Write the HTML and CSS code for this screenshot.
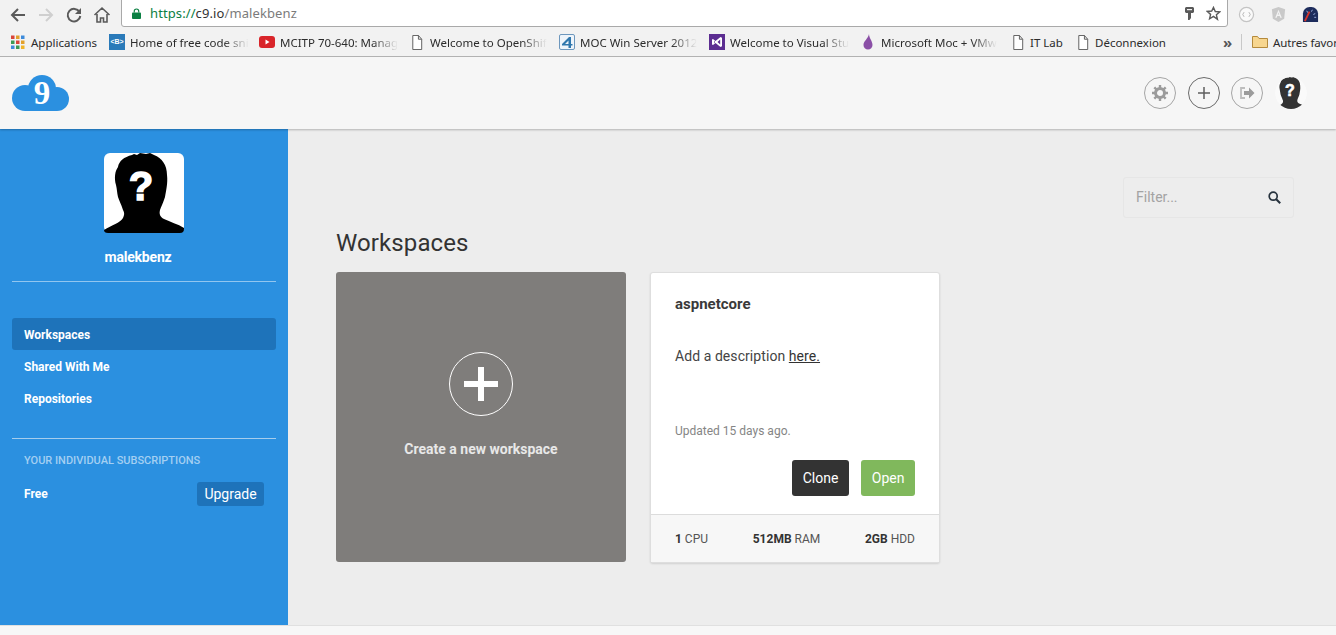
FILE: index.html
```html
<!DOCTYPE html>
<html lang="en">
<head>
  <meta charset="UTF-8">
  <meta name="viewport" content="width=device-width, initial-scale=1.0">
  <title>malekbenz - Cloud9</title>
  <link rel="stylesheet" href="styles.css">
</head>
<body>
  <!-- browser toolbar -->
  <div class="toolbar">
    <div class="nav-icons">
      <svg class="nav-icon" viewBox="0 0 18 18"><path d="M16 9H3M9 3L3 9l6 6" fill="none" stroke="#5a5a5a" stroke-width="2"/></svg>
      <svg class="nav-icon" viewBox="0 0 18 18"><path d="M2 9h13M9 3l6 6-6 6" fill="none" stroke="#cfcfcf" stroke-width="2"/></svg>
      <svg class="nav-icon" viewBox="0 0 18 18"><path d="M14.5 6A6.3 6.3 0 1 0 15.3 10" fill="none" stroke="#5a5a5a" stroke-width="2"/><path d="M16 2v6h-6z" fill="#5a5a5a"/></svg>
      <svg class="nav-icon" viewBox="0 0 18 18"><path d="M1.5 9L9 2l7.5 7M4 8v8h3.500v-4h3v4H14V8" fill="none" stroke="#5a5a5a" stroke-width="1.6"/></svg>
    </div>
    <div class="url-bar">
      <svg class="lock" viewBox="0 0 10 12"><path d="M2.5 5V3.5a2.5 2.5 0 0 1 5 0V5" fill="none" stroke="#0b8043" stroke-width="1.3"/><rect y="5" width="10" height="7" rx="1" fill="#0b8043"/></svg>
      <span class="url"><span class="url-scheme">https://</span><span class="url-host">c9.io</span>/malekbenz</span>
      <svg class="key" viewBox="0 0 9 13"><path d="M1 0h7l1 1v4L8 6H6v5L4.500 13H3V6H1L0 5V1z" fill="#5a5a5a"/><rect x="2" y="2" width="5" height="1.200" fill="#f2f2f2"/></svg>
      <svg class="star" viewBox="0 0 16 16"><path d="M8 1.5l1.900 4.400 4.800.4-3.600 3.100 1.100 4.700L8 11.100l-4.200 2.500 1.100-4.700-3.600-3.100 4.800-.4z" fill="none" stroke="#5a5a5a" stroke-width="1.5"/></svg>
    </div>
    <div class="ext-icons">
      <svg class="ext-icon" viewBox="0 0 18 18"><circle cx="9" cy="9" r="7.500" fill="#fafafa" stroke="#c4c4c4" stroke-width="1.300"/><path d="M6.500 6.500L5 9l1.500 2.500M11.500 6.500L13 9l-1.500 2.500" fill="none" stroke="#b5b5b5"/></svg>
      <svg class="ext-icon" viewBox="0 0 18 18"><path d="M9 1l7 2.500-1 10L9 17l-6-3.500-1-10z" fill="#c9c9c9"/><path d="M9 4l-3.500 8.500h1.600l.7-2h2.400l.7 2h1.600zM8.300 9L9 7l.7 2z" fill="#f2f2f2"/></svg>
      <svg class="ext-icon" viewBox="0 0 18 18"><path d="M1 17V8a7 7 0 0 1 7-7h2a7 7 0 0 1 7 7v9z" fill="#1d2c5c"/><path d="M3 16L8 6" stroke="#d8342b" stroke-width="2"/><path d="M5 5l1 2M11 4l-1 2M14 8l-2 1M15 12h-2" stroke="#9fb4e0"/></svg>
    </div>
  </div>

  <!-- bookmarks -->
  <div class="bookmarks">
    <a class="bookmark bookmark-apps">
      <svg class="bm-icon-small" viewBox="0 0 14 14">
        <rect width="3.500" height="3.500" fill="#d9443a"/><rect x="5" width="3.500" height="3.500" fill="#e2a12c"/><rect x="10" width="3.500" height="3.500" fill="#3d8bdb"/>
        <rect y="5" width="3.500" height="3.500" fill="#3c9a55"/><rect x="5" y="5" width="3.500" height="3.500" fill="#d9443a"/><rect x="10" y="5" width="3.500" height="3.500" fill="#e2a12c"/>
        <rect y="10" width="3.500" height="3.500" fill="#3d8bdb"/><rect x="5" y="10" width="3.500" height="3.500" fill="#3c9a55"/><rect x="10" y="10" width="3.500" height="3.500" fill="#f0b429"/>
      </svg>
      <span class="bm-text">Applications</span>
    </a>
    <a class="bookmark">
      <span class="bm-tile">&lt;B&gt;</span>
      <span class="bm-text bm-fade">Home of free code sni</span>
    </a>
    <a class="bookmark bookmark-wide">
      <svg class="bm-icon" viewBox="0 0 16 16"><rect y="2" width="16" height="12" rx="3" fill="#d9252a"/><path d="M6.500 5.500v5l4-2.500z" fill="#fff"/></svg>
      <span class="bm-text bm-fade">MCITP 70-640: Manag</span>
    </a>
    <a class="bookmark bookmark-narrow">
      <svg class="bm-icon-small" viewBox="0 0 14 16"><path d="M2.500.5h6l3.500 4v11h-9.500zM8.500.5v4h3.500" fill="#fff" stroke="#5a5a5a"/></svg>
      <span class="bm-text bm-fade">Welcome to OpenShif</span>
    </a>
    <a class="bookmark">
      <svg class="bm-icon" viewBox="0 0 16 16"><rect x=".5" y=".5" width="15" height="15" rx="1.500" fill="#eef4fa" stroke="#6d97bd"/><path d="M10 3L3 10v1.500h6.500V14H12v-2.500h1.500V10H12V3zM6 10l3.500-3.500V10z" fill="#2f77ad"/></svg>
      <span class="bm-text bm-fade">MOC Win Server 2012</span>
    </a>
    <a class="bookmark bookmark-wide">
      <svg class="bm-icon" viewBox="0 0 16 16"><rect width="16" height="16" fill="#5c2d91"/><path d="M11.500 3L6.500 7 4 5 3 5.500v5L4 11l2.500-2 5 4 1.500-.8V3.800zM5 9.200V6.800L6 8zM11.200 10.500L8.500 8l2.700-2.500z" fill="#fff"/></svg>
      <span class="bm-text bm-fade">Welcome to Visual Stu</span>
    </a>
    <a class="bookmark bookmark-wide">
      <svg class="bm-icon" viewBox="0 0 16 16"><path d="M9 0C9 4 12.500 7 12.500 11A4.500 4.500 0 0 1 3.500 11C3.500 7 8 5 9 0z" fill="#8a4fa6"/></svg>
      <span class="bm-text bm-fade">Microsoft Moc + VMw</span>
    </a>
    <a class="bookmark bookmark-short">
      <svg class="bm-icon-small" viewBox="0 0 14 16"><path d="M2.500.5h6l3.500 4v11h-9.500zM8.500.5v4h3.500" fill="#fff" stroke="#5a5a5a"/></svg>
      <span class="bm-text">IT Lab</span>
    </a>
    <a class="bookmark bookmark-last">
      <svg class="bm-icon-small" viewBox="0 0 14 16"><path d="M2.500.5h6l3.500 4v11h-9.500zM8.500.5v4h3.500" fill="#fff" stroke="#5a5a5a"/></svg>
      <span class="bm-text">Déconnexion</span>
    </a>
    <span class="bm-more">»</span>
    <span class="bm-sep"></span>
    <a class="bookmark bookmark-folder">
      <svg class="bm-folder" viewBox="0 0 16 14"><path d="M.5 12.500v-11h5l1.500 2h8.500v9z" fill="#f7d68f" stroke="#b58a3c"/></svg>
      <span class="bm-text">Autres favor</span>
    </a>
  </div>

  <!-- c9 header -->
  <header class="app-header">
    <svg class="logo" width="58" height="36" viewBox="0 0 58 36">
      <g fill="#2b90e0">
        <circle cx="30" cy="14" r="14"/>
        <circle cx="13" cy="23" r="13"/>
        <circle cx="45" cy="24" r="12"/>
        <rect x="13" y="14" width="32" height="22"/>
      </g>
      <text class="logo-nine" x="30" y="29" text-anchor="middle">9</text>
    </svg>
    <div class="header-actions">
      <span class="circle-btn">
        <svg width="16" height="16" viewBox="0 0 16 16"><circle cx="8" cy="8" r="4.500" fill="none" stroke="#9b9b9b" stroke-width="3"/><path d="M8 0v3M8 13v3M0 8h3M13 8h3M2.300 2.300l2.200 2.200M11.500 11.500l2.200 2.200M13.700 2.300l-2.200 2.200M4.500 11.500l-2.200 2.200" stroke="#9b9b9b" stroke-width="2.400"/></svg>
      </span>
      <span class="circle-btn circle-btn-dark">
        <svg width="14" height="14" viewBox="0 0 14 14"><path d="M7 1v12M1 7h12" stroke="#5f5f5f" stroke-width="1.500"/></svg>
      </span>
      <span class="circle-btn">
        <svg width="16" height="14" viewBox="0 0 16 14"><path d="M6 2H2v10h4" fill="none" stroke="#bdbdbd" stroke-width="1.800"/><path d="M5 5h5V1.500L15.500 7 10 12.500V9H5z" fill="#9b9b9b"/></svg>
      </span>
      <span class="header-avatar">
        <svg width="32" height="32" viewBox="0 0 80 80">
          <circle cx="40" cy="40" r="40" fill="#fafafa"/>
          <path class="head-dark" d="M0 77C8 72 16 70 19 65 21 61 20 59 19 57 17 51 15 47 14 44 13 40 13 36 12 32 10 25 11 18 14 14 15 8 20 4 28 2L30 1 33 2 36 0 42 1 46 0 50 2C58 5 63 12 63 22 64 30 62 38 61 44 59 50 57 54 56 57 55 61 56 64 60 66 66 69 74 71 80 75V80H0z"/>
          <text class="avatar-mark" x="37" y="47" text-anchor="middle">?</text>
        </svg>
      </span>
    </div>
  </header>

  <div class="page">
    <aside class="sidebar">
      <div class="profile">
        <svg class="profile-pic" width="80" height="80" viewBox="0 0 80 80">
          <rect width="80" height="80" rx="6" fill="#fff"/>
          <path d="M0 77C8 72 16 70 19 65 21 61 20 59 19 57 17 51 15 47 14 44 13 40 13 36 12 32 10 25 11 18 14 14 15 8 20 4 28 2L30 1 33 2 36 0 42 1 46 0 50 2C58 5 63 12 63 22 64 30 62 38 61 44 59 50 57 54 56 57 55 61 56 64 60 66 66 69 74 71 80 75V76Q80 80 76 80H4Q0 80 0 77z" fill="#000"/>
          <text class="profile-mark" x="37" y="47" text-anchor="middle">?</text>
        </svg>
        <div class="username">malekbenz</div>
      </div>
      <nav class="side-nav">
        <a class="side-link side-link-active">Workspaces</a>
        <a class="side-link">Shared With Me</a>
        <a class="side-link">Repositories</a>
      </nav>
      <div class="subs">
        <div class="subs-title">YOUR INDIVIDUAL SUBSCRIPTIONS</div>
        <div class="subs-row">
          <span class="subs-plan">Free</span>
          <a class="upgrade-btn">Upgrade</a>
        </div>
      </div>
    </aside>

    <main class="content">
      <div class="filter-row">
        <div class="filter">
          <span class="filter-text">Filter...</span>
          <svg width="13" height="13" viewBox="0 0 13 13"><circle cx="5.200" cy="5.200" r="4" fill="none" stroke="#26323d" stroke-width="1.700"/><path d="M8.200 8.200l4 4" stroke="#26323d" stroke-width="2"/></svg>
        </div>
      </div>
      <h1 class="title">Workspaces</h1>
      <div class="cards">
        <a class="new-card">
          <span class="new-circle">
            <svg width="34" height="34" viewBox="0 0 34 34"><path d="M17 0v34M0 17h34" stroke="#fff" stroke-width="6"/></svg>
          </span>
          <span class="new-label">Create a new workspace</span>
        </a>
        <div class="ws-card">
          <div class="ws-body">
            <div class="ws-name">aspnetcore</div>
            <div class="ws-desc">Add a description <a class="ws-link">here.</a></div>
            <div class="ws-updated">Updated 15 days ago.</div>
            <div class="ws-buttons">
              <a class="btn btn-clone">Clone</a>
              <a class="btn btn-open">Open</a>
            </div>
          </div>
          <div class="ws-specs">
            <span><b>1</b> CPU</span>
            <span><b>512MB</b> RAM</span>
            <span><b>2GB</b> HDD</span>
          </div>
        </div>
      </div>
    </main>
  </div>

  <footer class="page-footer"></footer>
</body>
</html>
```

FILE: styles.css
```css
/* reset */
* {
  box-sizing: border-box;
}

html, body {
  margin: 0;
  padding: 0;
  height: 100%;
  overflow: hidden;
}

body {
  width: 1336px;
  height: 635px;
  font-family: Roboto, sans-serif;
  background-color: #ededed;
  color: #333;
}

a {
  text-decoration: none;
}

svg {
  display: block;
  flex: none;
}

/* browser toolbar */
.toolbar {
  display: flex;
  align-items: flex-start;
  height: 28px;
  background-color: #f2f2f2;
}

.nav-icons {
  display: flex;
  gap: 10px;
  width: 121px;
  padding: 6px 0 0 9px;
}

.nav-icon {
  width: 18px;
  height: 18px;
}

.url-bar {
  display: flex;
  align-items: center;
  width: 1107px;
  height: 28px;
  margin-top: -1px;
  padding: 0 6px 0 10px;
  background-color: #fff;
  border: 1px solid #a9a9a9;
  border-radius: 0 0 3px 3px;
}

.lock {
  width: 9px;
  height: 11px;
  margin-right: 9px;
}

.url {
  flex: 1;
  font-family: "Noto Sans", sans-serif;
  font-size: 13px;
  letter-spacing: 0.1px;
  color: #7b7b7b;
}

.url-scheme {
  color: #0b8043;
}

.url-host {
  color: #333;
}

.key {
  width: 9px;
  height: 13px;
  margin-right: 12px;
}

.star {
  width: 15px;
  height: 15px;
}

.ext-icons {
  display: flex;
  gap: 15px;
  padding: 6px 0 0 10px;
}

.ext-icon {
  width: 17px;
  height: 17px;
}

/* bookmarks */
.bookmarks {
  display: flex;
  align-items: center;
  height: 29px;
  padding-left: 11px;
  background-color: #f2f2f2;
  border-bottom: 1px solid #b5b5b5;
  font-family: "Noto Sans", sans-serif;
  font-size: 11.5px;
  color: #2b2b2b;
  white-space: nowrap;
  overflow: hidden;
}

.bookmark {
  display: flex;
  flex: none;
  align-items: center;
  gap: 5px;
  width: 150px;
}

.bookmark-apps {
  width: 98px;
  gap: 6px;
}

.bookmark-wide {
  width: 151px;
}

.bookmark-narrow {
  width: 149px;
  gap: 6px;
}

.bookmark-short {
  width: 65px;
}

.bookmark-last {
  width: 147px;
}

.bookmark-folder {
  width: 84px;
  letter-spacing: -0.1px;
}

.bm-icon {
  width: 16px;
  height: 16px;
}

.bm-icon-small {
  width: 14px;
  height: 15px;
}

.bm-tile {
  flex: none;
  width: 16px;
  height: 16px;
  background-color: #2a7ab9;
  color: #fff;
  font-family: "Liberation Sans", sans-serif;
  font-size: 7px;
  font-weight: 700;
  line-height: 16px;
  text-align: center;
}

.bm-text {
  display: block;
}

.bm-fade {
  -webkit-mask-image: linear-gradient(to right, #000 78%, transparent);
  mask-image: linear-gradient(to right, #000 78%, transparent);
}

.bm-more {
  flex: none;
  width: 18px;
  font-size: 15px;
  font-weight: 700;
  line-height: 14px;
  color: #555;
}

.bm-sep {
  flex: none;
  width: 1px;
  height: 16px;
  margin-right: 10px;
  background-color: #c8c8c8;
}

.bm-folder {
  width: 16px;
  height: 14px;
}

/* c9 header */
.app-header {
  position: relative;
  display: flex;
  align-items: center;
  justify-content: space-between;
  height: 72px;
  padding: 0 29px 0 12px;
  background-color: #f6f6f6;
  box-shadow: 0 1px 2px rgba(0, 0, 0, 0.25);
}

.logo-nine {
  font-family: "Liberation Serif", serif;
  font-size: 33px;
  font-weight: 700;
  fill: #fff;
}

.header-actions {
  display: flex;
  align-items: center;
  gap: 12px;
}

.circle-btn {
  display: flex;
  align-items: center;
  justify-content: center;
  width: 32px;
  height: 32px;
  border: 1px solid #a5a5a5;
  border-radius: 50%;
}

.circle-btn-dark {
  margin-right: -1px;
  border-color: #6a6a6a;
}

.header-avatar {
  display: block;
  width: 32px;
  height: 32px;
  overflow: hidden;
  border-radius: 50%;
}

.head-dark {
  fill: #333;
}

.avatar-mark, .profile-mark {
  font-family: "Liberation Sans", sans-serif;
  font-weight: 700;
  font-size: 40px;
  fill: #fff;
  stroke: #fff;
  stroke-width: 1.5px;
}

/* page */
.page {
  display: flex;
  height: 496px;
}

.sidebar {
  flex: none;
  width: 288px;
  padding: 24px 12px 0;
  background-color: #2b90e0;
  color: #fff;
}

.profile {
  height: 129px;
  border-bottom: 1px solid #92c6ef;
  text-align: center;
}

.profile-pic {
  margin: 0 auto;
}

.username {
  margin-top: 16px;
  padding-right: 12px;
  font-size: 14px;
  font-weight: 700;
  line-height: 16px;
  letter-spacing: -0.2px;
}

.side-nav {
  display: flex;
  flex-direction: column;
  height: 157px;
  padding-top: 36px;
  border-bottom: 1px solid #a6cdec;
}

.side-link {
  display: block;
  height: 32px;
  padding-left: 12px;
  border-radius: 3px;
  font-size: 12px;
  font-weight: 700;
  line-height: 34px;
  color: #fff;
}

.side-link-active {
  background-color: #1e73ba;
}

.subs {
  padding: 15px 12px 0;
}

.subs-title {
  font-size: 11px;
  font-weight: 500;
  line-height: 13px;
  color: #a3cff2;
}

.subs-row {
  display: flex;
  align-items: center;
  justify-content: space-between;
  margin-top: 15px;
}

.subs-plan {
  font-size: 12px;
  font-weight: 700;
}

.upgrade-btn {
  display: block;
  width: 67px;
  height: 24px;
  background-color: #1e73ba;
  border-radius: 3px;
  font-size: 14px;
  line-height: 24px;
  text-align: center;
  color: #fff;
}

.content {
  flex: 1;
  padding: 48px 42px 0 48px;
}

.filter-row {
  display: flex;
  justify-content: flex-end;
}

.filter {
  display: flex;
  align-items: center;
  justify-content: space-between;
  width: 171px;
  height: 41px;
  padding: 0 12px;
  border: 1px solid #e6e6e6;
  border-radius: 3px;
}

.filter-text {
  margin-top: -2px;
  font-size: 14px;
  color: #a3a3a3;
}

.title {
  margin: 11px 0 15px;
  font-size: 24px;
  font-weight: 400;
  line-height: 28px;
  letter-spacing: 0.1px;
  color: #333;
}

.cards {
  display: flex;
  gap: 24px;
}

.new-card {
  display: flex;
  flex-direction: column;
  align-items: center;
  width: 290px;
  height: 290px;
  padding-top: 80px;
  background-color: #7f7d7b;
  border-radius: 3px;
}

.new-circle {
  display: flex;
  align-items: center;
  justify-content: center;
  width: 64px;
  height: 64px;
  border: 1px solid #fff;
  border-radius: 50%;
}

.new-label {
  margin-top: 25px;
  font-size: 14px;
  font-weight: 700;
  line-height: 16px;
  color: #e8e8e8;
}

.ws-card {
  display: flex;
  flex-direction: column;
  width: 290px;
  height: 291px;
  background-color: #fff;
  border: 1px solid #dedede;
  border-radius: 3px;
  box-shadow: 0 1px 2px rgba(0, 0, 0, 0.12);
}

.ws-body {
  flex: 1;
  padding: 23px 24px 0;
}

.ws-name {
  font-size: 15px;
  font-weight: 700;
  line-height: 16px;
  color: #3a3a3a;
}

.ws-desc {
  margin-top: 36px;
  font-size: 14px;
  line-height: 16px;
  letter-spacing: 0.07px;
  color: #444;
}

.ws-link {
  color: #333;
  text-decoration: underline;
}

.ws-updated {
  margin-top: 60px;
  font-size: 12px;
  line-height: 14px;
  color: #858585;
}

.ws-buttons {
  display: flex;
  justify-content: flex-end;
  gap: 12px;
  margin-top: 22px;
}

.btn {
  display: block;
  height: 36px;
  padding: 0 11px;
  border-radius: 3px;
  font-size: 14px;
  line-height: 36px;
  color: #fff;
}

.btn-clone {
  background-color: #333;
}

.btn-open {
  padding: 0 10.5px;
  background-color: #80b85c;
}

.ws-specs {
  display: flex;
  justify-content: space-between;
  height: 48px;
  padding: 0 24px;
  background-color: #f7f7f7;
  border-top: 1px solid #dcdcdc;
  font-size: 12px;
  line-height: 49px;
  color: #555;
}

.ws-specs b {
  color: #333;
}

.page-footer {
  height: 10px;
  background-color: #f7f7f7;
  border-top: 1px solid #e0e0e0;
}
```
